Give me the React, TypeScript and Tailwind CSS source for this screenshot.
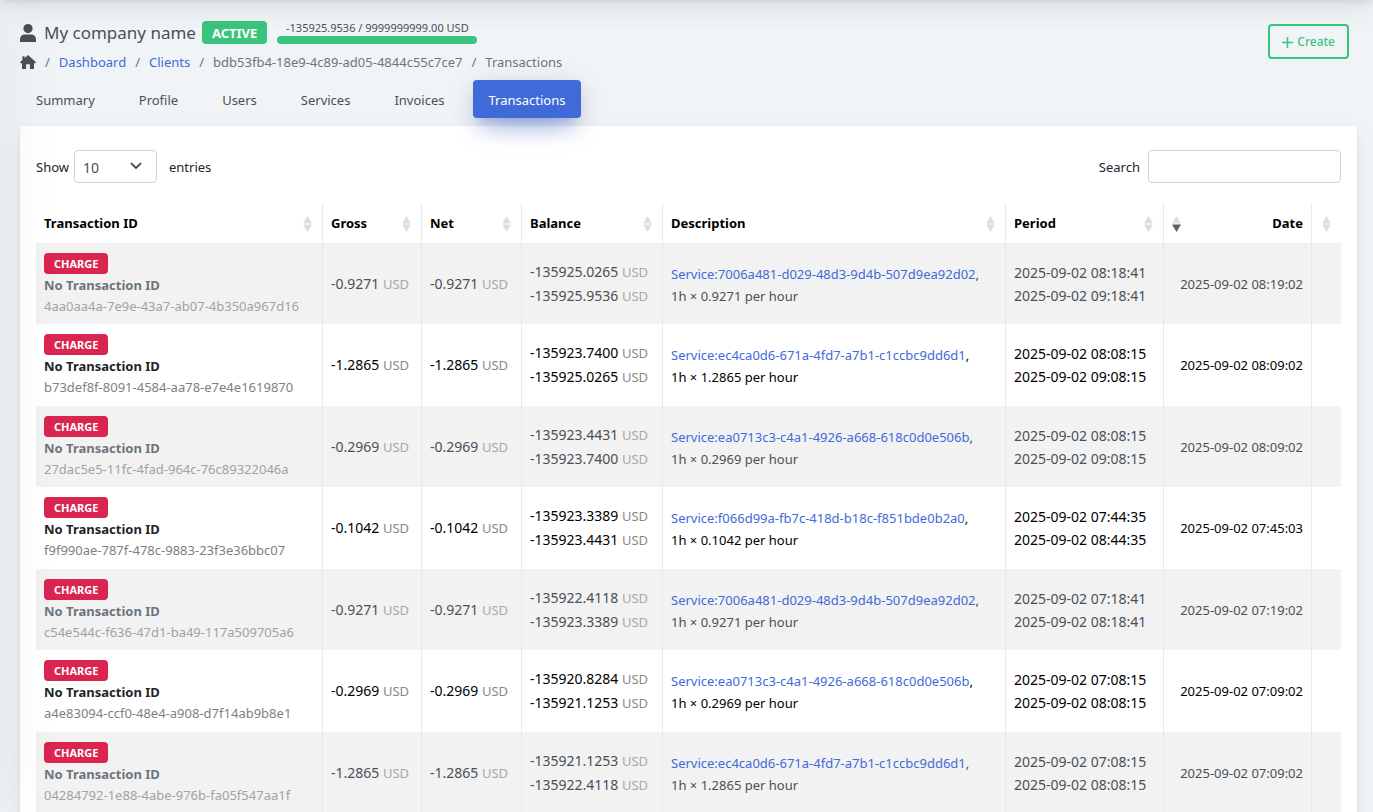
import { useState } from "react";
import { clsx } from "clsx";

const tabs = ["Summary", "Profile", "Users", "Services", "Invoices", "Transactions"];

type Transaction = {
  id: string;
  amount: string;
  balance: [string, string];
  service: string;
  period: [string, string];
  date: string;
};

const transactions: Transaction[] = [
  {
    id: "4aa0aa4a-7e9e-43a7-ab07-4b350a967d16",
    amount: "0.9271",
    balance: ["-135925.0265", "-135925.9536"],
    service: "7006a481-d029-48d3-9d4b-507d9ea92d02",
    period: ["2025-09-02 08:18:41", "2025-09-02 09:18:41"],
    date: "2025-09-02 08:19:02",
  },
  {
    id: "b73def8f-8091-4584-aa78-e7e4e1619870",
    amount: "1.2865",
    balance: ["-135923.7400", "-135925.0265"],
    service: "ec4ca0d6-671a-4fd7-a7b1-c1ccbc9dd6d1",
    period: ["2025-09-02 08:08:15", "2025-09-02 09:08:15"],
    date: "2025-09-02 08:09:02",
  },
  {
    id: "27dac5e5-11fc-4fad-964c-76c89322046a",
    amount: "0.2969",
    balance: ["-135923.4431", "-135923.7400"],
    service: "ea0713c3-c4a1-4926-a668-618c0d0e506b",
    period: ["2025-09-02 08:08:15", "2025-09-02 09:08:15"],
    date: "2025-09-02 08:09:02",
  },
  {
    id: "f9f990ae-787f-478c-9883-23f3e36bbc07",
    amount: "0.1042",
    balance: ["-135923.3389", "-135923.4431"],
    service: "f066d99a-fb7c-418d-b18c-f851bde0b2a0",
    period: ["2025-09-02 07:44:35", "2025-09-02 08:44:35"],
    date: "2025-09-02 07:45:03",
  },
  {
    id: "c54e544c-f636-47d1-ba49-117a509705a6",
    amount: "0.9271",
    balance: ["-135922.4118", "-135923.3389"],
    service: "7006a481-d029-48d3-9d4b-507d9ea92d02",
    period: ["2025-09-02 07:18:41", "2025-09-02 08:18:41"],
    date: "2025-09-02 07:19:02",
  },
  {
    id: "a4e83094-ccf0-48e4-a908-d7f14ab9b8e1",
    amount: "0.2969",
    balance: ["-135920.8284", "-135921.1253"],
    service: "ea0713c3-c4a1-4926-a668-618c0d0e506b",
    period: ["2025-09-02 07:08:15", "2025-09-02 08:08:15"],
    date: "2025-09-02 07:09:02",
  },
  {
    id: "04284792-1e88-4abe-976b-fa05f547aa1f",
    amount: "1.2865",
    balance: ["-135921.1253", "-135922.4118"],
    service: "ec4ca0d6-671a-4fd7-a7b1-c1ccbc9dd6d1",
    period: ["2025-09-02 07:08:15", "2025-09-02 08:08:15"],
    date: "2025-09-02 07:09:02",
  },
];

const columns = [
  { label: "Transaction ID", width: "w-[287px]" },
  { label: "Gross", width: "w-[99px]" },
  { label: "Net", width: "w-[100px]" },
  { label: "Balance", width: "w-[141px]" },
  { label: "Description", width: "" },
  { label: "Period", width: "w-[158px]" },
  { label: "Date", width: "w-[148px]", sorted: true },
  { label: "", width: "w-[29px]" },
];

function UserIcon() {
  return (
    <svg className="w-4 h-[18px]" viewBox="0 0 16 18" fill="currentColor" aria-hidden="true">
      <circle cx="8" cy="4.6" r="4.6" />
      <path d="M0 18v-2.6c0-2.8 2-5 4.6-5h6.8c2.6 0 4.6 2.2 4.6 5V18z" />
    </svg>
  );
}

function HomeIcon() {
  return (
    <svg className="w-4 h-[14px]" viewBox="0 0 16 14" fill="currentColor" aria-hidden="true">
      <path d="M8 0 16 7.2 15.2 8.2H14V14H9.9V9.2H6.1V14H2V8.2H.8L0 7.2 2.4 5V1.2H4.6V3z" />
    </svg>
  );
}

function SortIcon({ desc = false }: { desc?: boolean }) {
  return (
    <svg className="w-[9px] h-4 shrink-0" viewBox="0 0 9 16" aria-hidden="true">
      <path d="M4.5 0 9 7.5H0z" fill="#dedede" />
      <path d="M0 8.5H9L4.5 16z" fill={desc ? "#606060" : "#dedede"} />
    </svg>
  );
}

function Usd({ odd }: { odd: boolean }) {
  return <span className={clsx("text-[13px]", odd ? "text-[#a6a8aa]" : "text-[#888888]")}>USD</span>;
}

function Row({ tx, odd }: { tx: Transaction; odd: boolean }) {
  const cell = "px-2 border-r border-[#e9e9e9] whitespace-nowrap";
  return (
    <tr className={clsx(odd ? "h-[81px] bg-[#f2f2f2] text-[#495057]" : "h-[82px] text-black")}>
      <td className={clsx(cell, "pt-[10px] align-top")}>
        <div className="flex flex-col items-start">
          <span className="h-[21px] px-[10px] rounded bg-[#d92550] text-white text-[11px] leading-[22px] font-bold">CHARGE</span>
          <b className={clsx("text-[13px] leading-[22px]", odd ? "text-[#6c757d]" : "text-[#212529]")}>No Transaction ID</b>
          <span className={clsx("text-[13px] leading-[21px]", odd ? "text-[#a0a2a4]" : "text-[#808080]")}>{tx.id}</span>
        </div>
      </td>
      <td className={clsx(cell, "text-sm")}>
        -{tx.amount} <Usd odd={odd} />
      </td>
      <td className={clsx(cell, "text-sm")}>
        -{tx.amount} <Usd odd={odd} />
      </td>
      <td className={clsx(cell, "text-sm leading-[23px]")}>
        {tx.balance.map((value) => (
          <div key={value}>
            {value} <Usd odd={odd} />
          </div>
        ))}
      </td>
      <td className={clsx(cell, "pt-[2px] text-[13px] leading-[22px]")}>
        <div>
          <a href="#service" className="text-[#3f6ad8]">Service:{tx.service}</a>,
        </div>
        <div>1h × {tx.amount} per hour</div>
      </td>
      <td className={clsx(cell, "text-sm leading-[23px]")}>
        {tx.period.map((value) => (
          <div key={value}>{value}</div>
        ))}
      </td>
      <td className={clsx(cell, "pt-[2px] text-[13px] text-right")}>{tx.date}</td>
      <td></td>
    </tr>
  );
}

export default function App() {
  const [pageSize, setPageSize] = useState("10");
  const [search, setSearch] = useState("");

  return (
    <div className="relative h-screen overflow-hidden bg-[#f1f4f6] px-5 pt-5 font-['Noto_Sans',sans-serif] text-[13px] text-[#495057]">
      {/* shadows of the app bar and the side menu */}
      <div className="pointer-events-none absolute inset-x-0 -top-15 z-20 h-15 shadow-[0_8px_35px_rgba(4,9,20,0.03),0_15px_23px_rgba(4,9,20,0.03),0_4px_9px_rgba(4,9,20,0.05),0_2px_3px_rgba(4,9,20,0.03)]" />
      <div className="pointer-events-none absolute inset-y-0 -left-70 z-20 w-70 shadow-[7px_0_60px_rgba(0,0,0,0.05)]" />

      <header className="flex items-start justify-between pr-1">
        <div>
          <div className="flex items-center h-[25px]">
            <UserIcon />
            <h1 className="ml-2 text-[17px] leading-6">My company name</h1>
            <span className="ml-[6px] h-[23px] px-[10px] rounded bg-[#3ac47d] text-[13px] leading-6 font-bold text-white">ACTIVE</span>
            <div className="ml-[10px] -mt-px w-[200px]">
              <div className="text-center text-[11px] leading-4">-135925.9536 / 9999999999.00 USD</div>
              <div className="h-2 rounded bg-[#3ac47d]" />
            </div>
          </div>
          <nav aria-label="Breadcrumb" className="mt-[7px] flex items-center gap-[9px] leading-5 text-[#6c757d]">
            <a href="#home" aria-label="Home" className="text-[#495057]"><HomeIcon /></a>
            <span>/</span>
            <a href="#dashboard" className="text-[#3f6ad8]">Dashboard</a>
            <span>/</span>
            <a href="#clients" className="text-[#3f6ad8]">Clients</a>
            <span>/</span>
            <span>bdb53fb4-18e9-4c89-ad05-4844c55c7ce7</span>
            <span>/</span>
            <span>Transactions</span>
          </nav>
        </div>
        <button className="mt-1 flex h-[35px] items-center gap-1 rounded border-2 border-[#3ac47d] px-3 pt-px text-[12px] font-medium text-[#3ac47d]">
          <svg className="size-[11px]" viewBox="0 0 11 11" stroke="currentColor" strokeWidth="1.5" aria-hidden="true">
            <path d="M5.5 0v11M0 5.5h11" />
          </svg>
          Create
        </button>
      </header>

      <nav className="relative z-10 mt-2 flex gap-3">
        {tabs.map((tab) => (
          <a
            key={tab}
            href={"#" + tab.toLowerCase()}
            className={clsx(
              "h-[38px] px-4 rounded leading-[40px]",
              tab === "Transactions" &&
                "bg-[#3f6ad8] text-white shadow-[0_16px_26px_-10px_rgba(63,106,216,0.56),0_4px_25px_0_rgba(0,0,0,0.12),0_8px_10px_-5px_rgba(63,106,216,0.2)]"
            )}
          >
            {tab}
          </a>
        ))}
      </nav>

      <main className="mt-2 -mr-1 rounded bg-white px-4 pt-6 pb-8 shadow-[0_8px_35px_rgba(4,9,20,0.03),0_15px_23px_rgba(4,9,20,0.03),0_4px_9px_rgba(4,9,20,0.05),0_2px_3px_rgba(4,9,20,0.03)]">
        <div className="flex items-center justify-between text-[#212529]">
          <label className="flex items-center">
            <span className="pt-[3px]">Show</span>
            <span className="relative ml-[5px] mr-3">
              <select
                value={pageSize}
                onChange={(e) => setPageSize(e.target.value)}
                className="block h-[33px] w-[83px] appearance-none rounded border border-[#ced4da] bg-white px-2 pt-[2px] text-sm text-[#495057]"
              >
                <option>10</option>
                <option>25</option>
                <option>50</option>
                <option>100</option>
              </select>
              <svg className="pointer-events-none absolute right-[15px] top-3 h-2 w-3" viewBox="0 0 12 8" fill="none" stroke="#343a40" strokeWidth="1.7" aria-hidden="true">
                <path d="M1 1l5 5 5-5" />
              </svg>
            </span>
            <span className="pt-[3px]">entries</span>
          </label>
          <label className="flex items-center gap-2">
            <span className="pt-[3px]">Search</span>
            <input
              type="search"
              value={search}
              onChange={(e) => setSearch(e.target.value)}
              className="h-[33px] w-[193px] rounded border border-[#ced4da] px-2 text-sm"
            />
          </label>
        </div>

        <table className="mt-5 w-full table-fixed border-separate border-spacing-0">
          <thead>
            <tr className="h-10 text-black">
              {columns.map((col, i) => (
                <th key={i} className={clsx(col.width, "px-2 pt-[2px] text-left font-bold", i < columns.length - 1 && "border-r border-[#e9e9e9]")}>
                  <div className={clsx("flex items-center justify-between", col.sorted ? "flex-row-reverse" : "pr-[2px]")}>
                    <span>{col.label}</span>
                    <SortIcon desc={col.sorted} />
                  </div>
                </th>
              ))}
            </tr>
          </thead>
          <tbody>
            {transactions.map((tx, i) => (
              <Row key={tx.id} tx={tx} odd={i % 2 === 0} />
            ))}
          </tbody>
        </table>
      </main>
    </div>
  );
}
